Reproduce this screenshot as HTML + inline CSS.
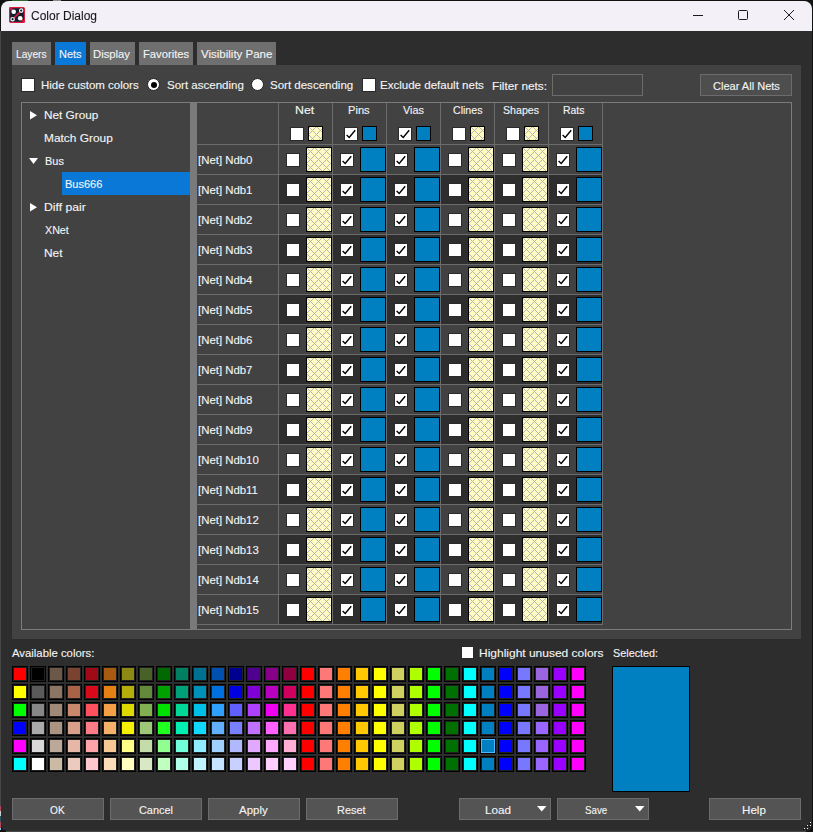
<!DOCTYPE html><html><head><meta charset="utf-8"><style>
html,body{margin:0;padding:0;width:813px;height:832px;overflow:hidden;background:#111311;}
div,svg{position:absolute;box-sizing:border-box;}
.t{font-family:"Liberation Sans",sans-serif;font-size:11.5px;line-height:14px;color:#f4f4f4;white-space:nowrap;-webkit-text-stroke:0.12px #f4f4f4;}
</style></head><body>
<svg width="0" height="0" style="position:absolute"><defs>
<pattern id="hatch" patternUnits="userSpaceOnUse" width="8" height="8"><g fill="#b4b4bc" shape-rendering="crispEdges"><rect x="0" y="0" width="1" height="1"/><rect x="1" y="1" width="1" height="1"/><rect x="1" y="7" width="1" height="1"/><rect x="2" y="2" width="1" height="1"/><rect x="2" y="6" width="1" height="1"/><rect x="3" y="3" width="1" height="1"/><rect x="3" y="5" width="1" height="1"/><rect x="4" y="4" width="1" height="1"/><rect x="5" y="3" width="1" height="1"/><rect x="5" y="5" width="1" height="1"/><rect x="6" y="2" width="1" height="1"/><rect x="6" y="6" width="1" height="1"/><rect x="7" y="1" width="1" height="1"/><rect x="7" y="7" width="1" height="1"/></g></pattern>
</defs></svg>
<div style="left:12px;top:0px;width:16px;height:1px;background:#2f6a2f;"></div><div style="left:53px;top:0px;width:8px;height:1px;background:#8a8a8a;"></div><div style="left:0px;top:806px;width:1px;height:5px;background:#b04858;"></div><div style="left:0px;top:811px;width:1px;height:5px;background:#c8d0d0;"></div><div style="left:0px;top:816px;width:1px;height:6px;background:#2f5560;"></div><div style="left:0px;top:822px;width:1px;height:6px;background:#b04858;"></div><div style="left:0px;top:828px;width:1px;height:2px;background:#80c0f0;"></div><div style="left:0px;top:31px;width:1px;height:775px;background:#474747;"></div><div style="left:1px;top:1px;width:811px;height:830px;background:#2d2d2d;border-radius:8px 8px 6px 6px;"></div><div style="left:6px;top:831px;width:800px;height:1px;background:#484848;"></div><div style="left:1px;top:1px;width:811px;height:30px;background:#f3f0f7;border-radius:8px 8px 0 0;"></div><div class="t" style="left:31px;top:9px;color:#1a1a1a;font-size:12px;-webkit-text-stroke:0.1px #1a1a1a;will-change:transform;">Color Dialog</div><svg style="left:9px;top:7px" width="16" height="16" viewBox="0 0 16 16">
<rect x="0.6" y="0.6" width="14.8" height="14.8" rx="1.5" fill="#0c2030" stroke="#d81c3c" stroke-width="1.2"/>
<path d="M4 12 L12 4" stroke="#e8183c" stroke-width="1.7"/>
<path d="M0.5 0.5 L4 4 M12 12 L15.5 15.5" stroke="#e8183c" stroke-width="1.7"/>
<circle cx="4.7" cy="4.7" r="2.3" fill="#fff"/><circle cx="11.2" cy="11.2" r="2.3" fill="#fff"/>
<circle cx="12.2" cy="3.6" r="1.7" fill="#0c2030" stroke="#f0f4f4" stroke-width="1.2"/>
<circle cx="3.6" cy="12.2" r="1.7" fill="#0c2030" stroke="#f0f4f4" stroke-width="1.2"/>
</svg><svg style="left:680px;top:0px" width="130" height="31" viewBox="0 0 130 31"><path d="M13 15.5 H23" stroke="#1a1a1a" stroke-width="1"/><rect x="58.5" y="10.5" width="9" height="9" rx="1" fill="none" stroke="#1a1a1a" stroke-width="1"/><path d="M104 10 L114 20 M114 10 L104 20" stroke="#1a1a1a" stroke-width="1"/></svg><div style="left:12px;top:42px;width:39px;height:23px;background:#6f6f6f;"></div><div class="t" style="left:15.51px;top:47px;transform:scaleX(0.8853);transform-origin:0 0;">Layers</div><div style="left:55px;top:42px;width:31px;height:23px;background:#0a78d7;"></div><div class="t" style="left:58.65px;top:47px;transform:scaleX(0.9522);transform-origin:0 0;">Nets</div><div style="left:90px;top:42px;width:45px;height:23px;background:#6f6f6f;"></div><div class="t" style="left:93.42px;top:47px;transform:scaleX(0.9811);transform-origin:0 0;">Display</div><div style="left:139px;top:42px;width:54px;height:23px;background:#6f6f6f;"></div><div class="t" style="left:142.62px;top:47px;transform:scaleX(0.9761);transform-origin:0 0;">Favorites</div><div style="left:197px;top:42px;width:79px;height:23px;background:#6f6f6f;"></div><div class="t" style="left:201.00px;top:47px;transform:scaleX(1.0000);transform-origin:0 0;">Visibility Pane</div><div style="left:12px;top:65px;width:789px;height:574px;background:#424242;"></div><div style="left:22px;top:79px;width:12px;height:12px;background:#fff;box-shadow:0 0 0 1px #2a2a2a;"></div><div class="t" style="left:40.70px;top:78px;transform:scaleX(0.9990);transform-origin:0 0;">Hide custom colors</div><div style="left:147px;top:78px;width:13px;height:13px;border-radius:50%;background:#fff;border:1px solid #222;"></div><div style="left:150.5px;top:81.5px;width:6px;height:6px;border-radius:50%;background:#000;"></div><div class="t" style="left:166.50px;top:78px;transform:scaleX(1.0026);transform-origin:0 0;">Sort ascending</div><div style="left:251px;top:78px;width:13px;height:13px;border-radius:50%;background:#fff;border:1px solid #222;"></div><div class="t" style="left:270.40px;top:78px;transform:scaleX(1.0012);transform-origin:0 0;">Sort descending</div><div style="left:363px;top:79px;width:11.5px;height:11.5px;background:#fff;box-shadow:0 0 0 1px #2a2a2a;"></div><div class="t" style="left:380.30px;top:78px;transform:scaleX(1.0029);transform-origin:0 0;">Exclude default nets</div><div class="t" style="left:491.58px;top:79px;transform:scaleX(1.0231);transform-origin:0 0;">Filter nets:</div><div style="left:552px;top:74px;width:91px;height:22px;border:1px solid #6c6c6c;"></div><div class="t" style="left:700px;top:74px;width:92px;height:22px;background:#4e4e4e;border:1px solid #6c6c6c;text-align:center;line-height:20px;"></div><div class="t" style="left:712.60px;top:79px;transform:scaleX(0.9600);transform-origin:0 0;">Clear All Nets</div><div style="left:21px;top:102px;width:771px;height:528px;border:1px solid #7c7c7c;"></div><div style="left:190px;top:103px;width:7px;height:526px;background:#7a7a7a;"></div><div class="t" style="left:44.27px;top:108px;transform:scaleX(1.0250);transform-origin:0 0;">Net Group</div><svg style="left:30px;top:110.5px" width="8" height="9"><path d="M0 0 L7 4.25 L0 8.5 Z" fill="#fff"/></svg><div class="t" style="left:44.26px;top:131px;transform:scaleX(1.0354);transform-origin:0 0;">Match Group</div><div class="t" style="left:44.55px;top:154px;transform:scaleX(0.9526);transform-origin:0 0;">Bus</div><svg style="left:29px;top:157.5px" width="10" height="7"><path d="M0 0 L9 0 L4.5 6 Z" fill="#fff"/></svg><div style="left:62px;top:172px;width:128px;height:23px;background:#0a78d7;"></div><div class="t" style="left:64.64px;top:177px;transform:scaleX(0.9579);transform-origin:0 0;">Bus666</div><div class="t" style="left:44.44px;top:200px;transform:scaleX(1.0615);transform-origin:0 0;">Diff pair</div><svg style="left:30px;top:202.5px" width="8" height="9"><path d="M0 0 L7 4.25 L0 8.5 Z" fill="#fff"/></svg><div class="t" style="left:44.80px;top:223px;transform:scaleX(0.9308);transform-origin:0 0;">XNet</div><div class="t" style="left:44.46px;top:246px;transform:scaleX(1.0353);transform-origin:0 0;">Net</div><div style="left:279px;top:175px;width:323px;height:29px;background:#2e2e2e;"></div><div style="left:279px;top:235px;width:323px;height:29px;background:#2e2e2e;"></div><div style="left:279px;top:295px;width:323px;height:29px;background:#2e2e2e;"></div><div style="left:279px;top:355px;width:323px;height:29px;background:#2e2e2e;"></div><div style="left:279px;top:415px;width:323px;height:29px;background:#2e2e2e;"></div><div style="left:279px;top:475px;width:323px;height:29px;background:#2e2e2e;"></div><div style="left:279px;top:535px;width:323px;height:29px;background:#2e2e2e;"></div><div style="left:279px;top:595px;width:323px;height:29px;background:#2e2e2e;"></div><div style="left:278px;top:103px;width:1px;height:522px;background:#6c6c6c;"></div><div style="left:332px;top:103px;width:1px;height:522px;background:#6c6c6c;"></div><div style="left:386px;top:103px;width:1px;height:522px;background:#6c6c6c;"></div><div style="left:440px;top:103px;width:1px;height:522px;background:#6c6c6c;"></div><div style="left:494px;top:103px;width:1px;height:522px;background:#6c6c6c;"></div><div style="left:548px;top:103px;width:1px;height:522px;background:#6c6c6c;"></div><div style="left:602px;top:103px;width:1px;height:522px;background:#6c6c6c;"></div><div style="left:196px;top:144px;width:407px;height:1px;background:#6c6c6c;"></div><div style="left:196px;top:174px;width:407px;height:1px;background:#6c6c6c;"></div><div style="left:196px;top:204px;width:407px;height:1px;background:#6c6c6c;"></div><div style="left:196px;top:234px;width:407px;height:1px;background:#6c6c6c;"></div><div style="left:196px;top:264px;width:407px;height:1px;background:#6c6c6c;"></div><div style="left:196px;top:294px;width:407px;height:1px;background:#6c6c6c;"></div><div style="left:196px;top:324px;width:407px;height:1px;background:#6c6c6c;"></div><div style="left:196px;top:354px;width:407px;height:1px;background:#6c6c6c;"></div><div style="left:196px;top:384px;width:407px;height:1px;background:#6c6c6c;"></div><div style="left:196px;top:414px;width:407px;height:1px;background:#6c6c6c;"></div><div style="left:196px;top:444px;width:407px;height:1px;background:#6c6c6c;"></div><div style="left:196px;top:474px;width:407px;height:1px;background:#6c6c6c;"></div><div style="left:196px;top:504px;width:407px;height:1px;background:#6c6c6c;"></div><div style="left:196px;top:534px;width:407px;height:1px;background:#6c6c6c;"></div><div style="left:196px;top:564px;width:407px;height:1px;background:#6c6c6c;"></div><div style="left:196px;top:594px;width:407px;height:1px;background:#6c6c6c;"></div><div style="left:196px;top:624px;width:407px;height:1px;background:#6c6c6c;"></div><div class="t" style="left:295.02px;top:103px;transform:scaleX(1.0765);transform-origin:0 0;">Net</div><div style="left:290.5px;top:127.5px;width:12px;height:12px;background:#fff;box-shadow:0 0 0 1px #2a2a2a;"></div><svg style="left:308px;top:126px" width="15" height="15"><rect x="0" y="0" width="15" height="15" fill="#fffbc0"/><rect x="0" y="0" width="15" height="15" fill="url(#hatch)"/><rect x="0.5" y="0.5" width="14" height="14" fill="none" stroke="#000" stroke-width="1"/></svg><div style="left:287px;top:154px;width:12px;height:12px;background:#fff;box-shadow:0 0 0 1px #2a2a2a;"></div><svg style="left:306px;top:147px" width="26" height="25"><rect x="0" y="0" width="26" height="25" fill="#fffbc0"/><rect x="0" y="0" width="26" height="25" fill="url(#hatch)"/><rect x="0.5" y="0.5" width="25" height="24" fill="none" stroke="#000" stroke-width="1"/></svg><div style="left:287px;top:184px;width:12px;height:12px;background:#fff;box-shadow:0 0 0 1px #2a2a2a;"></div><svg style="left:306px;top:177px" width="26" height="25"><rect x="0" y="0" width="26" height="25" fill="#fffbc0"/><rect x="0" y="0" width="26" height="25" fill="url(#hatch)"/><rect x="0.5" y="0.5" width="25" height="24" fill="none" stroke="#000" stroke-width="1"/></svg><div style="left:287px;top:214px;width:12px;height:12px;background:#fff;box-shadow:0 0 0 1px #2a2a2a;"></div><svg style="left:306px;top:207px" width="26" height="25"><rect x="0" y="0" width="26" height="25" fill="#fffbc0"/><rect x="0" y="0" width="26" height="25" fill="url(#hatch)"/><rect x="0.5" y="0.5" width="25" height="24" fill="none" stroke="#000" stroke-width="1"/></svg><div style="left:287px;top:244px;width:12px;height:12px;background:#fff;box-shadow:0 0 0 1px #2a2a2a;"></div><svg style="left:306px;top:237px" width="26" height="25"><rect x="0" y="0" width="26" height="25" fill="#fffbc0"/><rect x="0" y="0" width="26" height="25" fill="url(#hatch)"/><rect x="0.5" y="0.5" width="25" height="24" fill="none" stroke="#000" stroke-width="1"/></svg><div style="left:287px;top:274px;width:12px;height:12px;background:#fff;box-shadow:0 0 0 1px #2a2a2a;"></div><svg style="left:306px;top:267px" width="26" height="25"><rect x="0" y="0" width="26" height="25" fill="#fffbc0"/><rect x="0" y="0" width="26" height="25" fill="url(#hatch)"/><rect x="0.5" y="0.5" width="25" height="24" fill="none" stroke="#000" stroke-width="1"/></svg><div style="left:287px;top:304px;width:12px;height:12px;background:#fff;box-shadow:0 0 0 1px #2a2a2a;"></div><svg style="left:306px;top:297px" width="26" height="25"><rect x="0" y="0" width="26" height="25" fill="#fffbc0"/><rect x="0" y="0" width="26" height="25" fill="url(#hatch)"/><rect x="0.5" y="0.5" width="25" height="24" fill="none" stroke="#000" stroke-width="1"/></svg><div style="left:287px;top:334px;width:12px;height:12px;background:#fff;box-shadow:0 0 0 1px #2a2a2a;"></div><svg style="left:306px;top:327px" width="26" height="25"><rect x="0" y="0" width="26" height="25" fill="#fffbc0"/><rect x="0" y="0" width="26" height="25" fill="url(#hatch)"/><rect x="0.5" y="0.5" width="25" height="24" fill="none" stroke="#000" stroke-width="1"/></svg><div style="left:287px;top:364px;width:12px;height:12px;background:#fff;box-shadow:0 0 0 1px #2a2a2a;"></div><svg style="left:306px;top:357px" width="26" height="25"><rect x="0" y="0" width="26" height="25" fill="#fffbc0"/><rect x="0" y="0" width="26" height="25" fill="url(#hatch)"/><rect x="0.5" y="0.5" width="25" height="24" fill="none" stroke="#000" stroke-width="1"/></svg><div style="left:287px;top:394px;width:12px;height:12px;background:#fff;box-shadow:0 0 0 1px #2a2a2a;"></div><svg style="left:306px;top:387px" width="26" height="25"><rect x="0" y="0" width="26" height="25" fill="#fffbc0"/><rect x="0" y="0" width="26" height="25" fill="url(#hatch)"/><rect x="0.5" y="0.5" width="25" height="24" fill="none" stroke="#000" stroke-width="1"/></svg><div style="left:287px;top:424px;width:12px;height:12px;background:#fff;box-shadow:0 0 0 1px #2a2a2a;"></div><svg style="left:306px;top:417px" width="26" height="25"><rect x="0" y="0" width="26" height="25" fill="#fffbc0"/><rect x="0" y="0" width="26" height="25" fill="url(#hatch)"/><rect x="0.5" y="0.5" width="25" height="24" fill="none" stroke="#000" stroke-width="1"/></svg><div style="left:287px;top:454px;width:12px;height:12px;background:#fff;box-shadow:0 0 0 1px #2a2a2a;"></div><svg style="left:306px;top:447px" width="26" height="25"><rect x="0" y="0" width="26" height="25" fill="#fffbc0"/><rect x="0" y="0" width="26" height="25" fill="url(#hatch)"/><rect x="0.5" y="0.5" width="25" height="24" fill="none" stroke="#000" stroke-width="1"/></svg><div style="left:287px;top:484px;width:12px;height:12px;background:#fff;box-shadow:0 0 0 1px #2a2a2a;"></div><svg style="left:306px;top:477px" width="26" height="25"><rect x="0" y="0" width="26" height="25" fill="#fffbc0"/><rect x="0" y="0" width="26" height="25" fill="url(#hatch)"/><rect x="0.5" y="0.5" width="25" height="24" fill="none" stroke="#000" stroke-width="1"/></svg><div style="left:287px;top:514px;width:12px;height:12px;background:#fff;box-shadow:0 0 0 1px #2a2a2a;"></div><svg style="left:306px;top:507px" width="26" height="25"><rect x="0" y="0" width="26" height="25" fill="#fffbc0"/><rect x="0" y="0" width="26" height="25" fill="url(#hatch)"/><rect x="0.5" y="0.5" width="25" height="24" fill="none" stroke="#000" stroke-width="1"/></svg><div style="left:287px;top:544px;width:12px;height:12px;background:#fff;box-shadow:0 0 0 1px #2a2a2a;"></div><svg style="left:306px;top:537px" width="26" height="25"><rect x="0" y="0" width="26" height="25" fill="#fffbc0"/><rect x="0" y="0" width="26" height="25" fill="url(#hatch)"/><rect x="0.5" y="0.5" width="25" height="24" fill="none" stroke="#000" stroke-width="1"/></svg><div style="left:287px;top:574px;width:12px;height:12px;background:#fff;box-shadow:0 0 0 1px #2a2a2a;"></div><svg style="left:306px;top:567px" width="26" height="25"><rect x="0" y="0" width="26" height="25" fill="#fffbc0"/><rect x="0" y="0" width="26" height="25" fill="url(#hatch)"/><rect x="0.5" y="0.5" width="25" height="24" fill="none" stroke="#000" stroke-width="1"/></svg><div style="left:287px;top:604px;width:12px;height:12px;background:#fff;box-shadow:0 0 0 1px #2a2a2a;"></div><svg style="left:306px;top:597px" width="26" height="25"><rect x="0" y="0" width="26" height="25" fill="#fffbc0"/><rect x="0" y="0" width="26" height="25" fill="url(#hatch)"/><rect x="0.5" y="0.5" width="25" height="24" fill="none" stroke="#000" stroke-width="1"/></svg><div class="t" style="left:348.33px;top:103px;transform:scaleX(0.9667);transform-origin:0 0;">Pins</div><div style="left:344.5px;top:127.5px;width:12px;height:12px;background:#fff;box-shadow:0 0 0 1px #2a2a2a;"></div><svg style="position:absolute;left:344.5px;top:127.5px" width="12" height="12" viewBox="0 0 12 12"><path d="M1.6 7.0 L4.2 9.4 L10.2 2.2" fill="none" stroke="#000" stroke-width="1.4"/></svg><div style="left:362px;top:126px;width:15px;height:15px;background:#0080c0;border:1px solid #000;"></div><div style="left:341px;top:154px;width:12px;height:12px;background:#fff;box-shadow:0 0 0 1px #2a2a2a;"></div><svg style="position:absolute;left:341px;top:154px" width="12" height="12" viewBox="0 0 12 12"><path d="M1.6 7.0 L4.2 9.4 L10.2 2.2" fill="none" stroke="#000" stroke-width="1.4"/></svg><div style="left:360px;top:147px;width:26px;height:25px;background:#0080c0;border:1px solid #000;"></div><div style="left:341px;top:184px;width:12px;height:12px;background:#fff;box-shadow:0 0 0 1px #2a2a2a;"></div><svg style="position:absolute;left:341px;top:184px" width="12" height="12" viewBox="0 0 12 12"><path d="M1.6 7.0 L4.2 9.4 L10.2 2.2" fill="none" stroke="#000" stroke-width="1.4"/></svg><div style="left:360px;top:177px;width:26px;height:25px;background:#0080c0;border:1px solid #000;"></div><div style="left:341px;top:214px;width:12px;height:12px;background:#fff;box-shadow:0 0 0 1px #2a2a2a;"></div><svg style="position:absolute;left:341px;top:214px" width="12" height="12" viewBox="0 0 12 12"><path d="M1.6 7.0 L4.2 9.4 L10.2 2.2" fill="none" stroke="#000" stroke-width="1.4"/></svg><div style="left:360px;top:207px;width:26px;height:25px;background:#0080c0;border:1px solid #000;"></div><div style="left:341px;top:244px;width:12px;height:12px;background:#fff;box-shadow:0 0 0 1px #2a2a2a;"></div><svg style="position:absolute;left:341px;top:244px" width="12" height="12" viewBox="0 0 12 12"><path d="M1.6 7.0 L4.2 9.4 L10.2 2.2" fill="none" stroke="#000" stroke-width="1.4"/></svg><div style="left:360px;top:237px;width:26px;height:25px;background:#0080c0;border:1px solid #000;"></div><div style="left:341px;top:274px;width:12px;height:12px;background:#fff;box-shadow:0 0 0 1px #2a2a2a;"></div><svg style="position:absolute;left:341px;top:274px" width="12" height="12" viewBox="0 0 12 12"><path d="M1.6 7.0 L4.2 9.4 L10.2 2.2" fill="none" stroke="#000" stroke-width="1.4"/></svg><div style="left:360px;top:267px;width:26px;height:25px;background:#0080c0;border:1px solid #000;"></div><div style="left:341px;top:304px;width:12px;height:12px;background:#fff;box-shadow:0 0 0 1px #2a2a2a;"></div><svg style="position:absolute;left:341px;top:304px" width="12" height="12" viewBox="0 0 12 12"><path d="M1.6 7.0 L4.2 9.4 L10.2 2.2" fill="none" stroke="#000" stroke-width="1.4"/></svg><div style="left:360px;top:297px;width:26px;height:25px;background:#0080c0;border:1px solid #000;"></div><div style="left:341px;top:334px;width:12px;height:12px;background:#fff;box-shadow:0 0 0 1px #2a2a2a;"></div><svg style="position:absolute;left:341px;top:334px" width="12" height="12" viewBox="0 0 12 12"><path d="M1.6 7.0 L4.2 9.4 L10.2 2.2" fill="none" stroke="#000" stroke-width="1.4"/></svg><div style="left:360px;top:327px;width:26px;height:25px;background:#0080c0;border:1px solid #000;"></div><div style="left:341px;top:364px;width:12px;height:12px;background:#fff;box-shadow:0 0 0 1px #2a2a2a;"></div><svg style="position:absolute;left:341px;top:364px" width="12" height="12" viewBox="0 0 12 12"><path d="M1.6 7.0 L4.2 9.4 L10.2 2.2" fill="none" stroke="#000" stroke-width="1.4"/></svg><div style="left:360px;top:357px;width:26px;height:25px;background:#0080c0;border:1px solid #000;"></div><div style="left:341px;top:394px;width:12px;height:12px;background:#fff;box-shadow:0 0 0 1px #2a2a2a;"></div><svg style="position:absolute;left:341px;top:394px" width="12" height="12" viewBox="0 0 12 12"><path d="M1.6 7.0 L4.2 9.4 L10.2 2.2" fill="none" stroke="#000" stroke-width="1.4"/></svg><div style="left:360px;top:387px;width:26px;height:25px;background:#0080c0;border:1px solid #000;"></div><div style="left:341px;top:424px;width:12px;height:12px;background:#fff;box-shadow:0 0 0 1px #2a2a2a;"></div><svg style="position:absolute;left:341px;top:424px" width="12" height="12" viewBox="0 0 12 12"><path d="M1.6 7.0 L4.2 9.4 L10.2 2.2" fill="none" stroke="#000" stroke-width="1.4"/></svg><div style="left:360px;top:417px;width:26px;height:25px;background:#0080c0;border:1px solid #000;"></div><div style="left:341px;top:454px;width:12px;height:12px;background:#fff;box-shadow:0 0 0 1px #2a2a2a;"></div><svg style="position:absolute;left:341px;top:454px" width="12" height="12" viewBox="0 0 12 12"><path d="M1.6 7.0 L4.2 9.4 L10.2 2.2" fill="none" stroke="#000" stroke-width="1.4"/></svg><div style="left:360px;top:447px;width:26px;height:25px;background:#0080c0;border:1px solid #000;"></div><div style="left:341px;top:484px;width:12px;height:12px;background:#fff;box-shadow:0 0 0 1px #2a2a2a;"></div><svg style="position:absolute;left:341px;top:484px" width="12" height="12" viewBox="0 0 12 12"><path d="M1.6 7.0 L4.2 9.4 L10.2 2.2" fill="none" stroke="#000" stroke-width="1.4"/></svg><div style="left:360px;top:477px;width:26px;height:25px;background:#0080c0;border:1px solid #000;"></div><div style="left:341px;top:514px;width:12px;height:12px;background:#fff;box-shadow:0 0 0 1px #2a2a2a;"></div><svg style="position:absolute;left:341px;top:514px" width="12" height="12" viewBox="0 0 12 12"><path d="M1.6 7.0 L4.2 9.4 L10.2 2.2" fill="none" stroke="#000" stroke-width="1.4"/></svg><div style="left:360px;top:507px;width:26px;height:25px;background:#0080c0;border:1px solid #000;"></div><div style="left:341px;top:544px;width:12px;height:12px;background:#fff;box-shadow:0 0 0 1px #2a2a2a;"></div><svg style="position:absolute;left:341px;top:544px" width="12" height="12" viewBox="0 0 12 12"><path d="M1.6 7.0 L4.2 9.4 L10.2 2.2" fill="none" stroke="#000" stroke-width="1.4"/></svg><div style="left:360px;top:537px;width:26px;height:25px;background:#0080c0;border:1px solid #000;"></div><div style="left:341px;top:574px;width:12px;height:12px;background:#fff;box-shadow:0 0 0 1px #2a2a2a;"></div><svg style="position:absolute;left:341px;top:574px" width="12" height="12" viewBox="0 0 12 12"><path d="M1.6 7.0 L4.2 9.4 L10.2 2.2" fill="none" stroke="#000" stroke-width="1.4"/></svg><div style="left:360px;top:567px;width:26px;height:25px;background:#0080c0;border:1px solid #000;"></div><div style="left:341px;top:604px;width:12px;height:12px;background:#fff;box-shadow:0 0 0 1px #2a2a2a;"></div><svg style="position:absolute;left:341px;top:604px" width="12" height="12" viewBox="0 0 12 12"><path d="M1.6 7.0 L4.2 9.4 L10.2 2.2" fill="none" stroke="#000" stroke-width="1.4"/></svg><div style="left:360px;top:597px;width:26px;height:25px;background:#0080c0;border:1px solid #000;"></div><div class="t" style="left:403.00px;top:103px;transform:scaleX(0.9409);transform-origin:0 0;">Vias</div><div style="left:398.5px;top:127.5px;width:12px;height:12px;background:#fff;box-shadow:0 0 0 1px #2a2a2a;"></div><svg style="position:absolute;left:398.5px;top:127.5px" width="12" height="12" viewBox="0 0 12 12"><path d="M1.6 7.0 L4.2 9.4 L10.2 2.2" fill="none" stroke="#000" stroke-width="1.4"/></svg><div style="left:416px;top:126px;width:15px;height:15px;background:#0080c0;border:1px solid #000;"></div><div style="left:395px;top:154px;width:12px;height:12px;background:#fff;box-shadow:0 0 0 1px #2a2a2a;"></div><svg style="position:absolute;left:395px;top:154px" width="12" height="12" viewBox="0 0 12 12"><path d="M1.6 7.0 L4.2 9.4 L10.2 2.2" fill="none" stroke="#000" stroke-width="1.4"/></svg><div style="left:414px;top:147px;width:26px;height:25px;background:#0080c0;border:1px solid #000;"></div><div style="left:395px;top:184px;width:12px;height:12px;background:#fff;box-shadow:0 0 0 1px #2a2a2a;"></div><svg style="position:absolute;left:395px;top:184px" width="12" height="12" viewBox="0 0 12 12"><path d="M1.6 7.0 L4.2 9.4 L10.2 2.2" fill="none" stroke="#000" stroke-width="1.4"/></svg><div style="left:414px;top:177px;width:26px;height:25px;background:#0080c0;border:1px solid #000;"></div><div style="left:395px;top:214px;width:12px;height:12px;background:#fff;box-shadow:0 0 0 1px #2a2a2a;"></div><svg style="position:absolute;left:395px;top:214px" width="12" height="12" viewBox="0 0 12 12"><path d="M1.6 7.0 L4.2 9.4 L10.2 2.2" fill="none" stroke="#000" stroke-width="1.4"/></svg><div style="left:414px;top:207px;width:26px;height:25px;background:#0080c0;border:1px solid #000;"></div><div style="left:395px;top:244px;width:12px;height:12px;background:#fff;box-shadow:0 0 0 1px #2a2a2a;"></div><svg style="position:absolute;left:395px;top:244px" width="12" height="12" viewBox="0 0 12 12"><path d="M1.6 7.0 L4.2 9.4 L10.2 2.2" fill="none" stroke="#000" stroke-width="1.4"/></svg><div style="left:414px;top:237px;width:26px;height:25px;background:#0080c0;border:1px solid #000;"></div><div style="left:395px;top:274px;width:12px;height:12px;background:#fff;box-shadow:0 0 0 1px #2a2a2a;"></div><svg style="position:absolute;left:395px;top:274px" width="12" height="12" viewBox="0 0 12 12"><path d="M1.6 7.0 L4.2 9.4 L10.2 2.2" fill="none" stroke="#000" stroke-width="1.4"/></svg><div style="left:414px;top:267px;width:26px;height:25px;background:#0080c0;border:1px solid #000;"></div><div style="left:395px;top:304px;width:12px;height:12px;background:#fff;box-shadow:0 0 0 1px #2a2a2a;"></div><svg style="position:absolute;left:395px;top:304px" width="12" height="12" viewBox="0 0 12 12"><path d="M1.6 7.0 L4.2 9.4 L10.2 2.2" fill="none" stroke="#000" stroke-width="1.4"/></svg><div style="left:414px;top:297px;width:26px;height:25px;background:#0080c0;border:1px solid #000;"></div><div style="left:395px;top:334px;width:12px;height:12px;background:#fff;box-shadow:0 0 0 1px #2a2a2a;"></div><svg style="position:absolute;left:395px;top:334px" width="12" height="12" viewBox="0 0 12 12"><path d="M1.6 7.0 L4.2 9.4 L10.2 2.2" fill="none" stroke="#000" stroke-width="1.4"/></svg><div style="left:414px;top:327px;width:26px;height:25px;background:#0080c0;border:1px solid #000;"></div><div style="left:395px;top:364px;width:12px;height:12px;background:#fff;box-shadow:0 0 0 1px #2a2a2a;"></div><svg style="position:absolute;left:395px;top:364px" width="12" height="12" viewBox="0 0 12 12"><path d="M1.6 7.0 L4.2 9.4 L10.2 2.2" fill="none" stroke="#000" stroke-width="1.4"/></svg><div style="left:414px;top:357px;width:26px;height:25px;background:#0080c0;border:1px solid #000;"></div><div style="left:395px;top:394px;width:12px;height:12px;background:#fff;box-shadow:0 0 0 1px #2a2a2a;"></div><svg style="position:absolute;left:395px;top:394px" width="12" height="12" viewBox="0 0 12 12"><path d="M1.6 7.0 L4.2 9.4 L10.2 2.2" fill="none" stroke="#000" stroke-width="1.4"/></svg><div style="left:414px;top:387px;width:26px;height:25px;background:#0080c0;border:1px solid #000;"></div><div style="left:395px;top:424px;width:12px;height:12px;background:#fff;box-shadow:0 0 0 1px #2a2a2a;"></div><svg style="position:absolute;left:395px;top:424px" width="12" height="12" viewBox="0 0 12 12"><path d="M1.6 7.0 L4.2 9.4 L10.2 2.2" fill="none" stroke="#000" stroke-width="1.4"/></svg><div style="left:414px;top:417px;width:26px;height:25px;background:#0080c0;border:1px solid #000;"></div><div style="left:395px;top:454px;width:12px;height:12px;background:#fff;box-shadow:0 0 0 1px #2a2a2a;"></div><svg style="position:absolute;left:395px;top:454px" width="12" height="12" viewBox="0 0 12 12"><path d="M1.6 7.0 L4.2 9.4 L10.2 2.2" fill="none" stroke="#000" stroke-width="1.4"/></svg><div style="left:414px;top:447px;width:26px;height:25px;background:#0080c0;border:1px solid #000;"></div><div style="left:395px;top:484px;width:12px;height:12px;background:#fff;box-shadow:0 0 0 1px #2a2a2a;"></div><svg style="position:absolute;left:395px;top:484px" width="12" height="12" viewBox="0 0 12 12"><path d="M1.6 7.0 L4.2 9.4 L10.2 2.2" fill="none" stroke="#000" stroke-width="1.4"/></svg><div style="left:414px;top:477px;width:26px;height:25px;background:#0080c0;border:1px solid #000;"></div><div style="left:395px;top:514px;width:12px;height:12px;background:#fff;box-shadow:0 0 0 1px #2a2a2a;"></div><svg style="position:absolute;left:395px;top:514px" width="12" height="12" viewBox="0 0 12 12"><path d="M1.6 7.0 L4.2 9.4 L10.2 2.2" fill="none" stroke="#000" stroke-width="1.4"/></svg><div style="left:414px;top:507px;width:26px;height:25px;background:#0080c0;border:1px solid #000;"></div><div style="left:395px;top:544px;width:12px;height:12px;background:#fff;box-shadow:0 0 0 1px #2a2a2a;"></div><svg style="position:absolute;left:395px;top:544px" width="12" height="12" viewBox="0 0 12 12"><path d="M1.6 7.0 L4.2 9.4 L10.2 2.2" fill="none" stroke="#000" stroke-width="1.4"/></svg><div style="left:414px;top:537px;width:26px;height:25px;background:#0080c0;border:1px solid #000;"></div><div style="left:395px;top:574px;width:12px;height:12px;background:#fff;box-shadow:0 0 0 1px #2a2a2a;"></div><svg style="position:absolute;left:395px;top:574px" width="12" height="12" viewBox="0 0 12 12"><path d="M1.6 7.0 L4.2 9.4 L10.2 2.2" fill="none" stroke="#000" stroke-width="1.4"/></svg><div style="left:414px;top:567px;width:26px;height:25px;background:#0080c0;border:1px solid #000;"></div><div style="left:395px;top:604px;width:12px;height:12px;background:#fff;box-shadow:0 0 0 1px #2a2a2a;"></div><svg style="position:absolute;left:395px;top:604px" width="12" height="12" viewBox="0 0 12 12"><path d="M1.6 7.0 L4.2 9.4 L10.2 2.2" fill="none" stroke="#000" stroke-width="1.4"/></svg><div style="left:414px;top:597px;width:26px;height:25px;background:#0080c0;border:1px solid #000;"></div><div class="t" style="left:452.80px;top:103px;transform:scaleX(0.9219);transform-origin:0 0;">Clines</div><div style="left:452.5px;top:127.5px;width:12px;height:12px;background:#fff;box-shadow:0 0 0 1px #2a2a2a;"></div><svg style="left:470px;top:126px" width="15" height="15"><rect x="0" y="0" width="15" height="15" fill="#fffbc0"/><rect x="0" y="0" width="15" height="15" fill="url(#hatch)"/><rect x="0.5" y="0.5" width="14" height="14" fill="none" stroke="#000" stroke-width="1"/></svg><div style="left:449px;top:154px;width:12px;height:12px;background:#fff;box-shadow:0 0 0 1px #2a2a2a;"></div><svg style="left:468px;top:147px" width="26" height="25"><rect x="0" y="0" width="26" height="25" fill="#fffbc0"/><rect x="0" y="0" width="26" height="25" fill="url(#hatch)"/><rect x="0.5" y="0.5" width="25" height="24" fill="none" stroke="#000" stroke-width="1"/></svg><div style="left:449px;top:184px;width:12px;height:12px;background:#fff;box-shadow:0 0 0 1px #2a2a2a;"></div><svg style="left:468px;top:177px" width="26" height="25"><rect x="0" y="0" width="26" height="25" fill="#fffbc0"/><rect x="0" y="0" width="26" height="25" fill="url(#hatch)"/><rect x="0.5" y="0.5" width="25" height="24" fill="none" stroke="#000" stroke-width="1"/></svg><div style="left:449px;top:214px;width:12px;height:12px;background:#fff;box-shadow:0 0 0 1px #2a2a2a;"></div><svg style="left:468px;top:207px" width="26" height="25"><rect x="0" y="0" width="26" height="25" fill="#fffbc0"/><rect x="0" y="0" width="26" height="25" fill="url(#hatch)"/><rect x="0.5" y="0.5" width="25" height="24" fill="none" stroke="#000" stroke-width="1"/></svg><div style="left:449px;top:244px;width:12px;height:12px;background:#fff;box-shadow:0 0 0 1px #2a2a2a;"></div><svg style="left:468px;top:237px" width="26" height="25"><rect x="0" y="0" width="26" height="25" fill="#fffbc0"/><rect x="0" y="0" width="26" height="25" fill="url(#hatch)"/><rect x="0.5" y="0.5" width="25" height="24" fill="none" stroke="#000" stroke-width="1"/></svg><div style="left:449px;top:274px;width:12px;height:12px;background:#fff;box-shadow:0 0 0 1px #2a2a2a;"></div><svg style="left:468px;top:267px" width="26" height="25"><rect x="0" y="0" width="26" height="25" fill="#fffbc0"/><rect x="0" y="0" width="26" height="25" fill="url(#hatch)"/><rect x="0.5" y="0.5" width="25" height="24" fill="none" stroke="#000" stroke-width="1"/></svg><div style="left:449px;top:304px;width:12px;height:12px;background:#fff;box-shadow:0 0 0 1px #2a2a2a;"></div><svg style="left:468px;top:297px" width="26" height="25"><rect x="0" y="0" width="26" height="25" fill="#fffbc0"/><rect x="0" y="0" width="26" height="25" fill="url(#hatch)"/><rect x="0.5" y="0.5" width="25" height="24" fill="none" stroke="#000" stroke-width="1"/></svg><div style="left:449px;top:334px;width:12px;height:12px;background:#fff;box-shadow:0 0 0 1px #2a2a2a;"></div><svg style="left:468px;top:327px" width="26" height="25"><rect x="0" y="0" width="26" height="25" fill="#fffbc0"/><rect x="0" y="0" width="26" height="25" fill="url(#hatch)"/><rect x="0.5" y="0.5" width="25" height="24" fill="none" stroke="#000" stroke-width="1"/></svg><div style="left:449px;top:364px;width:12px;height:12px;background:#fff;box-shadow:0 0 0 1px #2a2a2a;"></div><svg style="left:468px;top:357px" width="26" height="25"><rect x="0" y="0" width="26" height="25" fill="#fffbc0"/><rect x="0" y="0" width="26" height="25" fill="url(#hatch)"/><rect x="0.5" y="0.5" width="25" height="24" fill="none" stroke="#000" stroke-width="1"/></svg><div style="left:449px;top:394px;width:12px;height:12px;background:#fff;box-shadow:0 0 0 1px #2a2a2a;"></div><svg style="left:468px;top:387px" width="26" height="25"><rect x="0" y="0" width="26" height="25" fill="#fffbc0"/><rect x="0" y="0" width="26" height="25" fill="url(#hatch)"/><rect x="0.5" y="0.5" width="25" height="24" fill="none" stroke="#000" stroke-width="1"/></svg><div style="left:449px;top:424px;width:12px;height:12px;background:#fff;box-shadow:0 0 0 1px #2a2a2a;"></div><svg style="left:468px;top:417px" width="26" height="25"><rect x="0" y="0" width="26" height="25" fill="#fffbc0"/><rect x="0" y="0" width="26" height="25" fill="url(#hatch)"/><rect x="0.5" y="0.5" width="25" height="24" fill="none" stroke="#000" stroke-width="1"/></svg><div style="left:449px;top:454px;width:12px;height:12px;background:#fff;box-shadow:0 0 0 1px #2a2a2a;"></div><svg style="left:468px;top:447px" width="26" height="25"><rect x="0" y="0" width="26" height="25" fill="#fffbc0"/><rect x="0" y="0" width="26" height="25" fill="url(#hatch)"/><rect x="0.5" y="0.5" width="25" height="24" fill="none" stroke="#000" stroke-width="1"/></svg><div style="left:449px;top:484px;width:12px;height:12px;background:#fff;box-shadow:0 0 0 1px #2a2a2a;"></div><svg style="left:468px;top:477px" width="26" height="25"><rect x="0" y="0" width="26" height="25" fill="#fffbc0"/><rect x="0" y="0" width="26" height="25" fill="url(#hatch)"/><rect x="0.5" y="0.5" width="25" height="24" fill="none" stroke="#000" stroke-width="1"/></svg><div style="left:449px;top:514px;width:12px;height:12px;background:#fff;box-shadow:0 0 0 1px #2a2a2a;"></div><svg style="left:468px;top:507px" width="26" height="25"><rect x="0" y="0" width="26" height="25" fill="#fffbc0"/><rect x="0" y="0" width="26" height="25" fill="url(#hatch)"/><rect x="0.5" y="0.5" width="25" height="24" fill="none" stroke="#000" stroke-width="1"/></svg><div style="left:449px;top:544px;width:12px;height:12px;background:#fff;box-shadow:0 0 0 1px #2a2a2a;"></div><svg style="left:468px;top:537px" width="26" height="25"><rect x="0" y="0" width="26" height="25" fill="#fffbc0"/><rect x="0" y="0" width="26" height="25" fill="url(#hatch)"/><rect x="0.5" y="0.5" width="25" height="24" fill="none" stroke="#000" stroke-width="1"/></svg><div style="left:449px;top:574px;width:12px;height:12px;background:#fff;box-shadow:0 0 0 1px #2a2a2a;"></div><svg style="left:468px;top:567px" width="26" height="25"><rect x="0" y="0" width="26" height="25" fill="#fffbc0"/><rect x="0" y="0" width="26" height="25" fill="url(#hatch)"/><rect x="0.5" y="0.5" width="25" height="24" fill="none" stroke="#000" stroke-width="1"/></svg><div style="left:449px;top:604px;width:12px;height:12px;background:#fff;box-shadow:0 0 0 1px #2a2a2a;"></div><svg style="left:468px;top:597px" width="26" height="25"><rect x="0" y="0" width="26" height="25" fill="#fffbc0"/><rect x="0" y="0" width="26" height="25" fill="url(#hatch)"/><rect x="0.5" y="0.5" width="25" height="24" fill="none" stroke="#000" stroke-width="1"/></svg><div class="t" style="left:503.40px;top:103px;transform:scaleX(0.9231);transform-origin:0 0;">Shapes</div><div style="left:506.5px;top:127.5px;width:12px;height:12px;background:#fff;box-shadow:0 0 0 1px #2a2a2a;"></div><svg style="left:524px;top:126px" width="15" height="15"><rect x="0" y="0" width="15" height="15" fill="#fffbc0"/><rect x="0" y="0" width="15" height="15" fill="url(#hatch)"/><rect x="0.5" y="0.5" width="14" height="14" fill="none" stroke="#000" stroke-width="1"/></svg><div style="left:503px;top:154px;width:12px;height:12px;background:#fff;box-shadow:0 0 0 1px #2a2a2a;"></div><svg style="left:522px;top:147px" width="26" height="25"><rect x="0" y="0" width="26" height="25" fill="#fffbc0"/><rect x="0" y="0" width="26" height="25" fill="url(#hatch)"/><rect x="0.5" y="0.5" width="25" height="24" fill="none" stroke="#000" stroke-width="1"/></svg><div style="left:503px;top:184px;width:12px;height:12px;background:#fff;box-shadow:0 0 0 1px #2a2a2a;"></div><svg style="left:522px;top:177px" width="26" height="25"><rect x="0" y="0" width="26" height="25" fill="#fffbc0"/><rect x="0" y="0" width="26" height="25" fill="url(#hatch)"/><rect x="0.5" y="0.5" width="25" height="24" fill="none" stroke="#000" stroke-width="1"/></svg><div style="left:503px;top:214px;width:12px;height:12px;background:#fff;box-shadow:0 0 0 1px #2a2a2a;"></div><svg style="left:522px;top:207px" width="26" height="25"><rect x="0" y="0" width="26" height="25" fill="#fffbc0"/><rect x="0" y="0" width="26" height="25" fill="url(#hatch)"/><rect x="0.5" y="0.5" width="25" height="24" fill="none" stroke="#000" stroke-width="1"/></svg><div style="left:503px;top:244px;width:12px;height:12px;background:#fff;box-shadow:0 0 0 1px #2a2a2a;"></div><svg style="left:522px;top:237px" width="26" height="25"><rect x="0" y="0" width="26" height="25" fill="#fffbc0"/><rect x="0" y="0" width="26" height="25" fill="url(#hatch)"/><rect x="0.5" y="0.5" width="25" height="24" fill="none" stroke="#000" stroke-width="1"/></svg><div style="left:503px;top:274px;width:12px;height:12px;background:#fff;box-shadow:0 0 0 1px #2a2a2a;"></div><svg style="left:522px;top:267px" width="26" height="25"><rect x="0" y="0" width="26" height="25" fill="#fffbc0"/><rect x="0" y="0" width="26" height="25" fill="url(#hatch)"/><rect x="0.5" y="0.5" width="25" height="24" fill="none" stroke="#000" stroke-width="1"/></svg><div style="left:503px;top:304px;width:12px;height:12px;background:#fff;box-shadow:0 0 0 1px #2a2a2a;"></div><svg style="left:522px;top:297px" width="26" height="25"><rect x="0" y="0" width="26" height="25" fill="#fffbc0"/><rect x="0" y="0" width="26" height="25" fill="url(#hatch)"/><rect x="0.5" y="0.5" width="25" height="24" fill="none" stroke="#000" stroke-width="1"/></svg><div style="left:503px;top:334px;width:12px;height:12px;background:#fff;box-shadow:0 0 0 1px #2a2a2a;"></div><svg style="left:522px;top:327px" width="26" height="25"><rect x="0" y="0" width="26" height="25" fill="#fffbc0"/><rect x="0" y="0" width="26" height="25" fill="url(#hatch)"/><rect x="0.5" y="0.5" width="25" height="24" fill="none" stroke="#000" stroke-width="1"/></svg><div style="left:503px;top:364px;width:12px;height:12px;background:#fff;box-shadow:0 0 0 1px #2a2a2a;"></div><svg style="left:522px;top:357px" width="26" height="25"><rect x="0" y="0" width="26" height="25" fill="#fffbc0"/><rect x="0" y="0" width="26" height="25" fill="url(#hatch)"/><rect x="0.5" y="0.5" width="25" height="24" fill="none" stroke="#000" stroke-width="1"/></svg><div style="left:503px;top:394px;width:12px;height:12px;background:#fff;box-shadow:0 0 0 1px #2a2a2a;"></div><svg style="left:522px;top:387px" width="26" height="25"><rect x="0" y="0" width="26" height="25" fill="#fffbc0"/><rect x="0" y="0" width="26" height="25" fill="url(#hatch)"/><rect x="0.5" y="0.5" width="25" height="24" fill="none" stroke="#000" stroke-width="1"/></svg><div style="left:503px;top:424px;width:12px;height:12px;background:#fff;box-shadow:0 0 0 1px #2a2a2a;"></div><svg style="left:522px;top:417px" width="26" height="25"><rect x="0" y="0" width="26" height="25" fill="#fffbc0"/><rect x="0" y="0" width="26" height="25" fill="url(#hatch)"/><rect x="0.5" y="0.5" width="25" height="24" fill="none" stroke="#000" stroke-width="1"/></svg><div style="left:503px;top:454px;width:12px;height:12px;background:#fff;box-shadow:0 0 0 1px #2a2a2a;"></div><svg style="left:522px;top:447px" width="26" height="25"><rect x="0" y="0" width="26" height="25" fill="#fffbc0"/><rect x="0" y="0" width="26" height="25" fill="url(#hatch)"/><rect x="0.5" y="0.5" width="25" height="24" fill="none" stroke="#000" stroke-width="1"/></svg><div style="left:503px;top:484px;width:12px;height:12px;background:#fff;box-shadow:0 0 0 1px #2a2a2a;"></div><svg style="left:522px;top:477px" width="26" height="25"><rect x="0" y="0" width="26" height="25" fill="#fffbc0"/><rect x="0" y="0" width="26" height="25" fill="url(#hatch)"/><rect x="0.5" y="0.5" width="25" height="24" fill="none" stroke="#000" stroke-width="1"/></svg><div style="left:503px;top:514px;width:12px;height:12px;background:#fff;box-shadow:0 0 0 1px #2a2a2a;"></div><svg style="left:522px;top:507px" width="26" height="25"><rect x="0" y="0" width="26" height="25" fill="#fffbc0"/><rect x="0" y="0" width="26" height="25" fill="url(#hatch)"/><rect x="0.5" y="0.5" width="25" height="24" fill="none" stroke="#000" stroke-width="1"/></svg><div style="left:503px;top:544px;width:12px;height:12px;background:#fff;box-shadow:0 0 0 1px #2a2a2a;"></div><svg style="left:522px;top:537px" width="26" height="25"><rect x="0" y="0" width="26" height="25" fill="#fffbc0"/><rect x="0" y="0" width="26" height="25" fill="url(#hatch)"/><rect x="0.5" y="0.5" width="25" height="24" fill="none" stroke="#000" stroke-width="1"/></svg><div style="left:503px;top:574px;width:12px;height:12px;background:#fff;box-shadow:0 0 0 1px #2a2a2a;"></div><svg style="left:522px;top:567px" width="26" height="25"><rect x="0" y="0" width="26" height="25" fill="#fffbc0"/><rect x="0" y="0" width="26" height="25" fill="url(#hatch)"/><rect x="0.5" y="0.5" width="25" height="24" fill="none" stroke="#000" stroke-width="1"/></svg><div style="left:503px;top:604px;width:12px;height:12px;background:#fff;box-shadow:0 0 0 1px #2a2a2a;"></div><svg style="left:522px;top:597px" width="26" height="25"><rect x="0" y="0" width="26" height="25" fill="#fffbc0"/><rect x="0" y="0" width="26" height="25" fill="url(#hatch)"/><rect x="0.5" y="0.5" width="25" height="24" fill="none" stroke="#000" stroke-width="1"/></svg><div class="t" style="left:563.49px;top:103px;transform:scaleX(0.9087);transform-origin:0 0;">Rats</div><div style="left:560.5px;top:127.5px;width:12px;height:12px;background:#fff;box-shadow:0 0 0 1px #2a2a2a;"></div><svg style="position:absolute;left:560.5px;top:127.5px" width="12" height="12" viewBox="0 0 12 12"><path d="M1.6 7.0 L4.2 9.4 L10.2 2.2" fill="none" stroke="#000" stroke-width="1.4"/></svg><div style="left:578px;top:126px;width:15px;height:15px;background:#0080c0;border:1px solid #000;"></div><div style="left:557px;top:154px;width:12px;height:12px;background:#fff;box-shadow:0 0 0 1px #2a2a2a;"></div><svg style="position:absolute;left:557px;top:154px" width="12" height="12" viewBox="0 0 12 12"><path d="M1.6 7.0 L4.2 9.4 L10.2 2.2" fill="none" stroke="#000" stroke-width="1.4"/></svg><div style="left:576px;top:147px;width:26px;height:25px;background:#0080c0;border:1px solid #000;"></div><div style="left:557px;top:184px;width:12px;height:12px;background:#fff;box-shadow:0 0 0 1px #2a2a2a;"></div><svg style="position:absolute;left:557px;top:184px" width="12" height="12" viewBox="0 0 12 12"><path d="M1.6 7.0 L4.2 9.4 L10.2 2.2" fill="none" stroke="#000" stroke-width="1.4"/></svg><div style="left:576px;top:177px;width:26px;height:25px;background:#0080c0;border:1px solid #000;"></div><div style="left:557px;top:214px;width:12px;height:12px;background:#fff;box-shadow:0 0 0 1px #2a2a2a;"></div><svg style="position:absolute;left:557px;top:214px" width="12" height="12" viewBox="0 0 12 12"><path d="M1.6 7.0 L4.2 9.4 L10.2 2.2" fill="none" stroke="#000" stroke-width="1.4"/></svg><div style="left:576px;top:207px;width:26px;height:25px;background:#0080c0;border:1px solid #000;"></div><div style="left:557px;top:244px;width:12px;height:12px;background:#fff;box-shadow:0 0 0 1px #2a2a2a;"></div><svg style="position:absolute;left:557px;top:244px" width="12" height="12" viewBox="0 0 12 12"><path d="M1.6 7.0 L4.2 9.4 L10.2 2.2" fill="none" stroke="#000" stroke-width="1.4"/></svg><div style="left:576px;top:237px;width:26px;height:25px;background:#0080c0;border:1px solid #000;"></div><div style="left:557px;top:274px;width:12px;height:12px;background:#fff;box-shadow:0 0 0 1px #2a2a2a;"></div><svg style="position:absolute;left:557px;top:274px" width="12" height="12" viewBox="0 0 12 12"><path d="M1.6 7.0 L4.2 9.4 L10.2 2.2" fill="none" stroke="#000" stroke-width="1.4"/></svg><div style="left:576px;top:267px;width:26px;height:25px;background:#0080c0;border:1px solid #000;"></div><div style="left:557px;top:304px;width:12px;height:12px;background:#fff;box-shadow:0 0 0 1px #2a2a2a;"></div><svg style="position:absolute;left:557px;top:304px" width="12" height="12" viewBox="0 0 12 12"><path d="M1.6 7.0 L4.2 9.4 L10.2 2.2" fill="none" stroke="#000" stroke-width="1.4"/></svg><div style="left:576px;top:297px;width:26px;height:25px;background:#0080c0;border:1px solid #000;"></div><div style="left:557px;top:334px;width:12px;height:12px;background:#fff;box-shadow:0 0 0 1px #2a2a2a;"></div><svg style="position:absolute;left:557px;top:334px" width="12" height="12" viewBox="0 0 12 12"><path d="M1.6 7.0 L4.2 9.4 L10.2 2.2" fill="none" stroke="#000" stroke-width="1.4"/></svg><div style="left:576px;top:327px;width:26px;height:25px;background:#0080c0;border:1px solid #000;"></div><div style="left:557px;top:364px;width:12px;height:12px;background:#fff;box-shadow:0 0 0 1px #2a2a2a;"></div><svg style="position:absolute;left:557px;top:364px" width="12" height="12" viewBox="0 0 12 12"><path d="M1.6 7.0 L4.2 9.4 L10.2 2.2" fill="none" stroke="#000" stroke-width="1.4"/></svg><div style="left:576px;top:357px;width:26px;height:25px;background:#0080c0;border:1px solid #000;"></div><div style="left:557px;top:394px;width:12px;height:12px;background:#fff;box-shadow:0 0 0 1px #2a2a2a;"></div><svg style="position:absolute;left:557px;top:394px" width="12" height="12" viewBox="0 0 12 12"><path d="M1.6 7.0 L4.2 9.4 L10.2 2.2" fill="none" stroke="#000" stroke-width="1.4"/></svg><div style="left:576px;top:387px;width:26px;height:25px;background:#0080c0;border:1px solid #000;"></div><div style="left:557px;top:424px;width:12px;height:12px;background:#fff;box-shadow:0 0 0 1px #2a2a2a;"></div><svg style="position:absolute;left:557px;top:424px" width="12" height="12" viewBox="0 0 12 12"><path d="M1.6 7.0 L4.2 9.4 L10.2 2.2" fill="none" stroke="#000" stroke-width="1.4"/></svg><div style="left:576px;top:417px;width:26px;height:25px;background:#0080c0;border:1px solid #000;"></div><div style="left:557px;top:454px;width:12px;height:12px;background:#fff;box-shadow:0 0 0 1px #2a2a2a;"></div><svg style="position:absolute;left:557px;top:454px" width="12" height="12" viewBox="0 0 12 12"><path d="M1.6 7.0 L4.2 9.4 L10.2 2.2" fill="none" stroke="#000" stroke-width="1.4"/></svg><div style="left:576px;top:447px;width:26px;height:25px;background:#0080c0;border:1px solid #000;"></div><div style="left:557px;top:484px;width:12px;height:12px;background:#fff;box-shadow:0 0 0 1px #2a2a2a;"></div><svg style="position:absolute;left:557px;top:484px" width="12" height="12" viewBox="0 0 12 12"><path d="M1.6 7.0 L4.2 9.4 L10.2 2.2" fill="none" stroke="#000" stroke-width="1.4"/></svg><div style="left:576px;top:477px;width:26px;height:25px;background:#0080c0;border:1px solid #000;"></div><div style="left:557px;top:514px;width:12px;height:12px;background:#fff;box-shadow:0 0 0 1px #2a2a2a;"></div><svg style="position:absolute;left:557px;top:514px" width="12" height="12" viewBox="0 0 12 12"><path d="M1.6 7.0 L4.2 9.4 L10.2 2.2" fill="none" stroke="#000" stroke-width="1.4"/></svg><div style="left:576px;top:507px;width:26px;height:25px;background:#0080c0;border:1px solid #000;"></div><div style="left:557px;top:544px;width:12px;height:12px;background:#fff;box-shadow:0 0 0 1px #2a2a2a;"></div><svg style="position:absolute;left:557px;top:544px" width="12" height="12" viewBox="0 0 12 12"><path d="M1.6 7.0 L4.2 9.4 L10.2 2.2" fill="none" stroke="#000" stroke-width="1.4"/></svg><div style="left:576px;top:537px;width:26px;height:25px;background:#0080c0;border:1px solid #000;"></div><div style="left:557px;top:574px;width:12px;height:12px;background:#fff;box-shadow:0 0 0 1px #2a2a2a;"></div><svg style="position:absolute;left:557px;top:574px" width="12" height="12" viewBox="0 0 12 12"><path d="M1.6 7.0 L4.2 9.4 L10.2 2.2" fill="none" stroke="#000" stroke-width="1.4"/></svg><div style="left:576px;top:567px;width:26px;height:25px;background:#0080c0;border:1px solid #000;"></div><div style="left:557px;top:604px;width:12px;height:12px;background:#fff;box-shadow:0 0 0 1px #2a2a2a;"></div><svg style="position:absolute;left:557px;top:604px" width="12" height="12" viewBox="0 0 12 12"><path d="M1.6 7.0 L4.2 9.4 L10.2 2.2" fill="none" stroke="#000" stroke-width="1.4"/></svg><div style="left:576px;top:597px;width:26px;height:25px;background:#0080c0;border:1px solid #000;"></div><div class="t" style="left:197.60px;top:153px;transform:scaleX(0.9900);transform-origin:0 0;">[Net] Ndb0</div><div class="t" style="left:197.60px;top:183px;transform:scaleX(0.9900);transform-origin:0 0;">[Net] Ndb1</div><div class="t" style="left:197.60px;top:213px;transform:scaleX(0.9900);transform-origin:0 0;">[Net] Ndb2</div><div class="t" style="left:197.60px;top:243px;transform:scaleX(0.9900);transform-origin:0 0;">[Net] Ndb3</div><div class="t" style="left:197.60px;top:273px;transform:scaleX(0.9900);transform-origin:0 0;">[Net] Ndb4</div><div class="t" style="left:197.60px;top:303px;transform:scaleX(0.9900);transform-origin:0 0;">[Net] Ndb5</div><div class="t" style="left:197.60px;top:333px;transform:scaleX(0.9900);transform-origin:0 0;">[Net] Ndb6</div><div class="t" style="left:197.60px;top:363px;transform:scaleX(0.9900);transform-origin:0 0;">[Net] Ndb7</div><div class="t" style="left:197.60px;top:393px;transform:scaleX(0.9900);transform-origin:0 0;">[Net] Ndb8</div><div class="t" style="left:197.60px;top:423px;transform:scaleX(0.9900);transform-origin:0 0;">[Net] Ndb9</div><div class="t" style="left:197.60px;top:453px;transform:scaleX(0.9900);transform-origin:0 0;">[Net] Ndb10</div><div class="t" style="left:197.60px;top:483px;transform:scaleX(0.9900);transform-origin:0 0;">[Net] Ndb11</div><div class="t" style="left:197.60px;top:513px;transform:scaleX(0.9900);transform-origin:0 0;">[Net] Ndb12</div><div class="t" style="left:197.60px;top:543px;transform:scaleX(0.9900);transform-origin:0 0;">[Net] Ndb13</div><div class="t" style="left:197.60px;top:573px;transform:scaleX(0.9900);transform-origin:0 0;">[Net] Ndb14</div><div class="t" style="left:197.60px;top:603px;transform:scaleX(0.9900);transform-origin:0 0;">[Net] Ndb15</div><div style="left:12px;top:666px;width:16px;height:16px;background:#ff0000;border:1px solid #000;box-shadow:inset 0 0 0 1px #202020;"></div><div style="left:12px;top:684px;width:16px;height:16px;background:#ffff00;border:1px solid #000;box-shadow:inset 0 0 0 1px #202020;"></div><div style="left:12px;top:702px;width:16px;height:16px;background:#00ff00;border:1px solid #000;box-shadow:inset 0 0 0 1px #202020;"></div><div style="left:12px;top:720px;width:16px;height:16px;background:#0000ff;border:1px solid #000;box-shadow:inset 0 0 0 1px #202020;"></div><div style="left:12px;top:738px;width:16px;height:16px;background:#ff00ff;border:1px solid #000;box-shadow:inset 0 0 0 1px #202020;"></div><div style="left:12px;top:756px;width:16px;height:16px;background:#00ffff;border:1px solid #000;box-shadow:inset 0 0 0 1px #202020;"></div><div style="left:30px;top:666px;width:16px;height:16px;background:#000000;border:1px solid #000;box-shadow:inset 0 0 0 1px #202020;"></div><div style="left:30px;top:684px;width:16px;height:16px;background:#5a5a5a;border:1px solid #000;box-shadow:inset 0 0 0 1px #202020;"></div><div style="left:30px;top:702px;width:16px;height:16px;background:#878787;border:1px solid #000;box-shadow:inset 0 0 0 1px #202020;"></div><div style="left:30px;top:720px;width:16px;height:16px;background:#aaaaaa;border:1px solid #000;box-shadow:inset 0 0 0 1px #202020;"></div><div style="left:30px;top:738px;width:16px;height:16px;background:#d8d8d8;border:1px solid #000;box-shadow:inset 0 0 0 1px #202020;"></div><div style="left:30px;top:756px;width:16px;height:16px;background:#ffffff;border:1px solid #000;box-shadow:inset 0 0 0 1px #202020;"></div><div style="left:48px;top:666px;width:16px;height:16px;background:#6b5849;border:1px solid #000;box-shadow:inset 0 0 0 1px #202020;"></div><div style="left:48px;top:684px;width:16px;height:16px;background:#8c7563;border:1px solid #000;box-shadow:inset 0 0 0 1px #202020;"></div><div style="left:48px;top:702px;width:16px;height:16px;background:#a08a77;border:1px solid #000;box-shadow:inset 0 0 0 1px #202020;"></div><div style="left:48px;top:720px;width:16px;height:16px;background:#ab9582;border:1px solid #000;box-shadow:inset 0 0 0 1px #202020;"></div><div style="left:48px;top:738px;width:16px;height:16px;background:#bba898;border:1px solid #000;box-shadow:inset 0 0 0 1px #202020;"></div><div style="left:48px;top:756px;width:16px;height:16px;background:#cbbba5;border:1px solid #000;box-shadow:inset 0 0 0 1px #202020;"></div><div style="left:66px;top:666px;width:16px;height:16px;background:#7a4330;border:1px solid #000;box-shadow:inset 0 0 0 1px #202020;"></div><div style="left:66px;top:684px;width:16px;height:16px;background:#a86245;border:1px solid #000;box-shadow:inset 0 0 0 1px #202020;"></div><div style="left:66px;top:702px;width:16px;height:16px;background:#c9876c;border:1px solid #000;box-shadow:inset 0 0 0 1px #202020;"></div><div style="left:66px;top:720px;width:16px;height:16px;background:#d7a08b;border:1px solid #000;box-shadow:inset 0 0 0 1px #202020;"></div><div style="left:66px;top:738px;width:16px;height:16px;background:#e6b7a6;border:1px solid #000;box-shadow:inset 0 0 0 1px #202020;"></div><div style="left:66px;top:756px;width:16px;height:16px;background:#eccabd;border:1px solid #000;box-shadow:inset 0 0 0 1px #202020;"></div><div style="left:84px;top:666px;width:16px;height:16px;background:#a00a17;border:1px solid #000;box-shadow:inset 0 0 0 1px #202020;"></div><div style="left:84px;top:684px;width:16px;height:16px;background:#d80a1a;border:1px solid #000;box-shadow:inset 0 0 0 1px #202020;"></div><div style="left:84px;top:702px;width:16px;height:16px;background:#ff5060;border:1px solid #000;box-shadow:inset 0 0 0 1px #202020;"></div><div style="left:84px;top:720px;width:16px;height:16px;background:#ff7b87;border:1px solid #000;box-shadow:inset 0 0 0 1px #202020;"></div><div style="left:84px;top:738px;width:16px;height:16px;background:#ffa3ab;border:1px solid #000;box-shadow:inset 0 0 0 1px #202020;"></div><div style="left:84px;top:756px;width:16px;height:16px;background:#ffc8cc;border:1px solid #000;box-shadow:inset 0 0 0 1px #202020;"></div><div style="left:102px;top:666px;width:16px;height:16px;background:#a85a10;border:1px solid #000;box-shadow:inset 0 0 0 1px #202020;"></div><div style="left:102px;top:684px;width:16px;height:16px;background:#e48014;border:1px solid #000;box-shadow:inset 0 0 0 1px #202020;"></div><div style="left:102px;top:702px;width:16px;height:16px;background:#f5a044;border:1px solid #000;box-shadow:inset 0 0 0 1px #202020;"></div><div style="left:102px;top:720px;width:16px;height:16px;background:#f5b06a;border:1px solid #000;box-shadow:inset 0 0 0 1px #202020;"></div><div style="left:102px;top:738px;width:16px;height:16px;background:#f8c894;border:1px solid #000;box-shadow:inset 0 0 0 1px #202020;"></div><div style="left:102px;top:756px;width:16px;height:16px;background:#fadcb9;border:1px solid #000;box-shadow:inset 0 0 0 1px #202020;"></div><div style="left:120px;top:666px;width:16px;height:16px;background:#8c8a14;border:1px solid #000;box-shadow:inset 0 0 0 1px #202020;"></div><div style="left:120px;top:684px;width:16px;height:16px;background:#b4ae0a;border:1px solid #000;box-shadow:inset 0 0 0 1px #202020;"></div><div style="left:120px;top:702px;width:16px;height:16px;background:#dcd800;border:1px solid #000;box-shadow:inset 0 0 0 1px #202020;"></div><div style="left:120px;top:720px;width:16px;height:16px;background:#f4f000;border:1px solid #000;box-shadow:inset 0 0 0 1px #202020;"></div><div style="left:120px;top:738px;width:16px;height:16px;background:#ffff88;border:1px solid #000;box-shadow:inset 0 0 0 1px #202020;"></div><div style="left:120px;top:756px;width:16px;height:16px;background:#ffffc0;border:1px solid #000;box-shadow:inset 0 0 0 1px #202020;"></div><div style="left:138px;top:666px;width:16px;height:16px;background:#476129;border:1px solid #000;box-shadow:inset 0 0 0 1px #202020;"></div><div style="left:138px;top:684px;width:16px;height:16px;background:#628a3a;border:1px solid #000;box-shadow:inset 0 0 0 1px #202020;"></div><div style="left:138px;top:702px;width:16px;height:16px;background:#80b050;border:1px solid #000;box-shadow:inset 0 0 0 1px #202020;"></div><div style="left:138px;top:720px;width:16px;height:16px;background:#9cc878;border:1px solid #000;box-shadow:inset 0 0 0 1px #202020;"></div><div style="left:138px;top:738px;width:16px;height:16px;background:#c4dcaa;border:1px solid #000;box-shadow:inset 0 0 0 1px #202020;"></div><div style="left:138px;top:756px;width:16px;height:16px;background:#d8e8c4;border:1px solid #000;box-shadow:inset 0 0 0 1px #202020;"></div><div style="left:156px;top:666px;width:16px;height:16px;background:#006a00;border:1px solid #000;box-shadow:inset 0 0 0 1px #202020;"></div><div style="left:156px;top:684px;width:16px;height:16px;background:#00a000;border:1px solid #000;box-shadow:inset 0 0 0 1px #202020;"></div><div style="left:156px;top:702px;width:16px;height:16px;background:#00e000;border:1px solid #000;box-shadow:inset 0 0 0 1px #202020;"></div><div style="left:156px;top:720px;width:16px;height:16px;background:#20ff20;border:1px solid #000;box-shadow:inset 0 0 0 1px #202020;"></div><div style="left:156px;top:738px;width:16px;height:16px;background:#90ff90;border:1px solid #000;box-shadow:inset 0 0 0 1px #202020;"></div><div style="left:156px;top:756px;width:16px;height:16px;background:#c0ffc0;border:1px solid #000;box-shadow:inset 0 0 0 1px #202020;"></div><div style="left:174px;top:666px;width:16px;height:16px;background:#008060;border:1px solid #000;box-shadow:inset 0 0 0 1px #202020;"></div><div style="left:174px;top:684px;width:16px;height:16px;background:#00a078;border:1px solid #000;box-shadow:inset 0 0 0 1px #202020;"></div><div style="left:174px;top:702px;width:16px;height:16px;background:#00d898;border:1px solid #000;box-shadow:inset 0 0 0 1px #202020;"></div><div style="left:174px;top:720px;width:16px;height:16px;background:#00f0b4;border:1px solid #000;box-shadow:inset 0 0 0 1px #202020;"></div><div style="left:174px;top:738px;width:16px;height:16px;background:#70ffd8;border:1px solid #000;box-shadow:inset 0 0 0 1px #202020;"></div><div style="left:174px;top:756px;width:16px;height:16px;background:#b0ffe8;border:1px solid #000;box-shadow:inset 0 0 0 1px #202020;"></div><div style="left:192px;top:666px;width:16px;height:16px;background:#007090;border:1px solid #000;box-shadow:inset 0 0 0 1px #202020;"></div><div style="left:192px;top:684px;width:16px;height:16px;background:#0090b8;border:1px solid #000;box-shadow:inset 0 0 0 1px #202020;"></div><div style="left:192px;top:702px;width:16px;height:16px;background:#00c0e8;border:1px solid #000;box-shadow:inset 0 0 0 1px #202020;"></div><div style="left:192px;top:720px;width:16px;height:16px;background:#10d8ff;border:1px solid #000;box-shadow:inset 0 0 0 1px #202020;"></div><div style="left:192px;top:738px;width:16px;height:16px;background:#90ecff;border:1px solid #000;box-shadow:inset 0 0 0 1px #202020;"></div><div style="left:192px;top:756px;width:16px;height:16px;background:#c0f4ff;border:1px solid #000;box-shadow:inset 0 0 0 1px #202020;"></div><div style="left:210px;top:666px;width:16px;height:16px;background:#0050b0;border:1px solid #000;box-shadow:inset 0 0 0 1px #202020;"></div><div style="left:210px;top:684px;width:16px;height:16px;background:#0070e0;border:1px solid #000;box-shadow:inset 0 0 0 1px #202020;"></div><div style="left:210px;top:702px;width:16px;height:16px;background:#30a0ff;border:1px solid #000;box-shadow:inset 0 0 0 1px #202020;"></div><div style="left:210px;top:720px;width:16px;height:16px;background:#60b0ff;border:1px solid #000;box-shadow:inset 0 0 0 1px #202020;"></div><div style="left:210px;top:738px;width:16px;height:16px;background:#a0d0ff;border:1px solid #000;box-shadow:inset 0 0 0 1px #202020;"></div><div style="left:210px;top:756px;width:16px;height:16px;background:#c4e4ff;border:1px solid #000;box-shadow:inset 0 0 0 1px #202020;"></div><div style="left:228px;top:666px;width:16px;height:16px;background:#000090;border:1px solid #000;box-shadow:inset 0 0 0 1px #202020;"></div><div style="left:228px;top:684px;width:16px;height:16px;background:#0000e0;border:1px solid #000;box-shadow:inset 0 0 0 1px #202020;"></div><div style="left:228px;top:702px;width:16px;height:16px;background:#6060ff;border:1px solid #000;box-shadow:inset 0 0 0 1px #202020;"></div><div style="left:228px;top:720px;width:16px;height:16px;background:#7880ff;border:1px solid #000;box-shadow:inset 0 0 0 1px #202020;"></div><div style="left:228px;top:738px;width:16px;height:16px;background:#b0b8ff;border:1px solid #000;box-shadow:inset 0 0 0 1px #202020;"></div><div style="left:228px;top:756px;width:16px;height:16px;background:#c8d0ff;border:1px solid #000;box-shadow:inset 0 0 0 1px #202020;"></div><div style="left:246px;top:666px;width:16px;height:16px;background:#500090;border:1px solid #000;box-shadow:inset 0 0 0 1px #202020;"></div><div style="left:246px;top:684px;width:16px;height:16px;background:#8000d8;border:1px solid #000;box-shadow:inset 0 0 0 1px #202020;"></div><div style="left:246px;top:702px;width:16px;height:16px;background:#b040ff;border:1px solid #000;box-shadow:inset 0 0 0 1px #202020;"></div><div style="left:246px;top:720px;width:16px;height:16px;background:#c070ff;border:1px solid #000;box-shadow:inset 0 0 0 1px #202020;"></div><div style="left:246px;top:738px;width:16px;height:16px;background:#e0a8ff;border:1px solid #000;box-shadow:inset 0 0 0 1px #202020;"></div><div style="left:246px;top:756px;width:16px;height:16px;background:#ecc8ff;border:1px solid #000;box-shadow:inset 0 0 0 1px #202020;"></div><div style="left:264px;top:666px;width:16px;height:16px;background:#880088;border:1px solid #000;box-shadow:inset 0 0 0 1px #202020;"></div><div style="left:264px;top:684px;width:16px;height:16px;background:#b800c0;border:1px solid #000;box-shadow:inset 0 0 0 1px #202020;"></div><div style="left:264px;top:702px;width:16px;height:16px;background:#f000f0;border:1px solid #000;box-shadow:inset 0 0 0 1px #202020;"></div><div style="left:264px;top:720px;width:16px;height:16px;background:#ff60ff;border:1px solid #000;box-shadow:inset 0 0 0 1px #202020;"></div><div style="left:264px;top:738px;width:16px;height:16px;background:#ffa8ff;border:1px solid #000;box-shadow:inset 0 0 0 1px #202020;"></div><div style="left:264px;top:756px;width:16px;height:16px;background:#ffd0ff;border:1px solid #000;box-shadow:inset 0 0 0 1px #202020;"></div><div style="left:282px;top:666px;width:16px;height:16px;background:#900040;border:1px solid #000;box-shadow:inset 0 0 0 1px #202020;"></div><div style="left:282px;top:684px;width:16px;height:16px;background:#d00060;border:1px solid #000;box-shadow:inset 0 0 0 1px #202020;"></div><div style="left:282px;top:702px;width:16px;height:16px;background:#ff3090;border:1px solid #000;box-shadow:inset 0 0 0 1px #202020;"></div><div style="left:282px;top:720px;width:16px;height:16px;background:#ff70b0;border:1px solid #000;box-shadow:inset 0 0 0 1px #202020;"></div><div style="left:282px;top:738px;width:16px;height:16px;background:#ffb0d4;border:1px solid #000;box-shadow:inset 0 0 0 1px #202020;"></div><div style="left:282px;top:756px;width:16px;height:16px;background:#ffd0ff;border:1px solid #000;box-shadow:inset 0 0 0 1px #202020;"></div><div style="left:300px;top:666px;width:16px;height:16px;background:#ff0000;border:1px solid #000;box-shadow:inset 0 0 0 1px #202020;"></div><div style="left:300px;top:684px;width:16px;height:16px;background:#ff0000;border:1px solid #000;box-shadow:inset 0 0 0 1px #202020;"></div><div style="left:300px;top:702px;width:16px;height:16px;background:#ff0000;border:1px solid #000;box-shadow:inset 0 0 0 1px #202020;"></div><div style="left:300px;top:720px;width:16px;height:16px;background:#ff0000;border:1px solid #000;box-shadow:inset 0 0 0 1px #202020;"></div><div style="left:300px;top:738px;width:16px;height:16px;background:#ff0000;border:1px solid #000;box-shadow:inset 0 0 0 1px #202020;"></div><div style="left:300px;top:756px;width:16px;height:16px;background:#ff0000;border:1px solid #000;box-shadow:inset 0 0 0 1px #202020;"></div><div style="left:318px;top:666px;width:16px;height:16px;background:#ff7878;border:1px solid #000;box-shadow:inset 0 0 0 1px #202020;"></div><div style="left:318px;top:684px;width:16px;height:16px;background:#ff7878;border:1px solid #000;box-shadow:inset 0 0 0 1px #202020;"></div><div style="left:318px;top:702px;width:16px;height:16px;background:#ff7878;border:1px solid #000;box-shadow:inset 0 0 0 1px #202020;"></div><div style="left:318px;top:720px;width:16px;height:16px;background:#ff7878;border:1px solid #000;box-shadow:inset 0 0 0 1px #202020;"></div><div style="left:318px;top:738px;width:16px;height:16px;background:#ff7878;border:1px solid #000;box-shadow:inset 0 0 0 1px #202020;"></div><div style="left:318px;top:756px;width:16px;height:16px;background:#ff7878;border:1px solid #000;box-shadow:inset 0 0 0 1px #202020;"></div><div style="left:336px;top:666px;width:16px;height:16px;background:#ff8000;border:1px solid #000;box-shadow:inset 0 0 0 1px #202020;"></div><div style="left:336px;top:684px;width:16px;height:16px;background:#ff8000;border:1px solid #000;box-shadow:inset 0 0 0 1px #202020;"></div><div style="left:336px;top:702px;width:16px;height:16px;background:#ff8000;border:1px solid #000;box-shadow:inset 0 0 0 1px #202020;"></div><div style="left:336px;top:720px;width:16px;height:16px;background:#ff8000;border:1px solid #000;box-shadow:inset 0 0 0 1px #202020;"></div><div style="left:336px;top:738px;width:16px;height:16px;background:#ff8000;border:1px solid #000;box-shadow:inset 0 0 0 1px #202020;"></div><div style="left:336px;top:756px;width:16px;height:16px;background:#ff8000;border:1px solid #000;box-shadow:inset 0 0 0 1px #202020;"></div><div style="left:354px;top:666px;width:16px;height:16px;background:#ffc800;border:1px solid #000;box-shadow:inset 0 0 0 1px #202020;"></div><div style="left:354px;top:684px;width:16px;height:16px;background:#ffc800;border:1px solid #000;box-shadow:inset 0 0 0 1px #202020;"></div><div style="left:354px;top:702px;width:16px;height:16px;background:#ffc800;border:1px solid #000;box-shadow:inset 0 0 0 1px #202020;"></div><div style="left:354px;top:720px;width:16px;height:16px;background:#ffc800;border:1px solid #000;box-shadow:inset 0 0 0 1px #202020;"></div><div style="left:354px;top:738px;width:16px;height:16px;background:#ffc800;border:1px solid #000;box-shadow:inset 0 0 0 1px #202020;"></div><div style="left:354px;top:756px;width:16px;height:16px;background:#ffc800;border:1px solid #000;box-shadow:inset 0 0 0 1px #202020;"></div><div style="left:372px;top:666px;width:16px;height:16px;background:#ffff00;border:1px solid #000;box-shadow:inset 0 0 0 1px #202020;"></div><div style="left:372px;top:684px;width:16px;height:16px;background:#ffff00;border:1px solid #000;box-shadow:inset 0 0 0 1px #202020;"></div><div style="left:372px;top:702px;width:16px;height:16px;background:#ffff00;border:1px solid #000;box-shadow:inset 0 0 0 1px #202020;"></div><div style="left:372px;top:720px;width:16px;height:16px;background:#ffff00;border:1px solid #000;box-shadow:inset 0 0 0 1px #202020;"></div><div style="left:372px;top:738px;width:16px;height:16px;background:#ffff00;border:1px solid #000;box-shadow:inset 0 0 0 1px #202020;"></div><div style="left:372px;top:756px;width:16px;height:16px;background:#ffff00;border:1px solid #000;box-shadow:inset 0 0 0 1px #202020;"></div><div style="left:390px;top:666px;width:16px;height:16px;background:#d0d060;border:1px solid #000;box-shadow:inset 0 0 0 1px #202020;"></div><div style="left:390px;top:684px;width:16px;height:16px;background:#d0d060;border:1px solid #000;box-shadow:inset 0 0 0 1px #202020;"></div><div style="left:390px;top:702px;width:16px;height:16px;background:#d0d060;border:1px solid #000;box-shadow:inset 0 0 0 1px #202020;"></div><div style="left:390px;top:720px;width:16px;height:16px;background:#d0d060;border:1px solid #000;box-shadow:inset 0 0 0 1px #202020;"></div><div style="left:390px;top:738px;width:16px;height:16px;background:#d0d060;border:1px solid #000;box-shadow:inset 0 0 0 1px #202020;"></div><div style="left:390px;top:756px;width:16px;height:16px;background:#d0d060;border:1px solid #000;box-shadow:inset 0 0 0 1px #202020;"></div><div style="left:408px;top:666px;width:16px;height:16px;background:#b0ff00;border:1px solid #000;box-shadow:inset 0 0 0 1px #202020;"></div><div style="left:408px;top:684px;width:16px;height:16px;background:#b0ff00;border:1px solid #000;box-shadow:inset 0 0 0 1px #202020;"></div><div style="left:408px;top:702px;width:16px;height:16px;background:#b0ff00;border:1px solid #000;box-shadow:inset 0 0 0 1px #202020;"></div><div style="left:408px;top:720px;width:16px;height:16px;background:#b0ff00;border:1px solid #000;box-shadow:inset 0 0 0 1px #202020;"></div><div style="left:408px;top:738px;width:16px;height:16px;background:#b0ff00;border:1px solid #000;box-shadow:inset 0 0 0 1px #202020;"></div><div style="left:408px;top:756px;width:16px;height:16px;background:#b0ff00;border:1px solid #000;box-shadow:inset 0 0 0 1px #202020;"></div><div style="left:426px;top:666px;width:16px;height:16px;background:#00ff00;border:1px solid #000;box-shadow:inset 0 0 0 1px #202020;"></div><div style="left:426px;top:684px;width:16px;height:16px;background:#00ff00;border:1px solid #000;box-shadow:inset 0 0 0 1px #202020;"></div><div style="left:426px;top:702px;width:16px;height:16px;background:#00ff00;border:1px solid #000;box-shadow:inset 0 0 0 1px #202020;"></div><div style="left:426px;top:720px;width:16px;height:16px;background:#00ff00;border:1px solid #000;box-shadow:inset 0 0 0 1px #202020;"></div><div style="left:426px;top:738px;width:16px;height:16px;background:#00ff00;border:1px solid #000;box-shadow:inset 0 0 0 1px #202020;"></div><div style="left:426px;top:756px;width:16px;height:16px;background:#00ff00;border:1px solid #000;box-shadow:inset 0 0 0 1px #202020;"></div><div style="left:444px;top:666px;width:16px;height:16px;background:#007000;border:1px solid #000;box-shadow:inset 0 0 0 1px #202020;"></div><div style="left:444px;top:684px;width:16px;height:16px;background:#007000;border:1px solid #000;box-shadow:inset 0 0 0 1px #202020;"></div><div style="left:444px;top:702px;width:16px;height:16px;background:#007000;border:1px solid #000;box-shadow:inset 0 0 0 1px #202020;"></div><div style="left:444px;top:720px;width:16px;height:16px;background:#007000;border:1px solid #000;box-shadow:inset 0 0 0 1px #202020;"></div><div style="left:444px;top:738px;width:16px;height:16px;background:#007000;border:1px solid #000;box-shadow:inset 0 0 0 1px #202020;"></div><div style="left:444px;top:756px;width:16px;height:16px;background:#007000;border:1px solid #000;box-shadow:inset 0 0 0 1px #202020;"></div><div style="left:462px;top:666px;width:16px;height:16px;background:#00ffff;border:1px solid #000;box-shadow:inset 0 0 0 1px #202020;"></div><div style="left:462px;top:684px;width:16px;height:16px;background:#00ffff;border:1px solid #000;box-shadow:inset 0 0 0 1px #202020;"></div><div style="left:462px;top:702px;width:16px;height:16px;background:#00ffff;border:1px solid #000;box-shadow:inset 0 0 0 1px #202020;"></div><div style="left:462px;top:720px;width:16px;height:16px;background:#00ffff;border:1px solid #000;box-shadow:inset 0 0 0 1px #202020;"></div><div style="left:462px;top:738px;width:16px;height:16px;background:#00ffff;border:1px solid #000;box-shadow:inset 0 0 0 1px #202020;"></div><div style="left:462px;top:756px;width:16px;height:16px;background:#00ffff;border:1px solid #000;box-shadow:inset 0 0 0 1px #202020;"></div><div style="left:480px;top:666px;width:16px;height:16px;background:#0080c0;border:1px solid #000;box-shadow:inset 0 0 0 1px #202020;"></div><div style="left:480px;top:684px;width:16px;height:16px;background:#0080c0;border:1px solid #000;box-shadow:inset 0 0 0 1px #202020;"></div><div style="left:480px;top:702px;width:16px;height:16px;background:#0080c0;border:1px solid #000;box-shadow:inset 0 0 0 1px #202020;"></div><div style="left:480px;top:720px;width:16px;height:16px;background:#0080c0;border:1px solid #000;box-shadow:inset 0 0 0 1px #202020;"></div><div style="left:480px;top:738px;width:16px;height:16px;background:#0080c0;border:1px solid #000;box-shadow:inset 0 0 0 1px #50b8ff;"></div><div style="left:480px;top:756px;width:16px;height:16px;background:#0080c0;border:1px solid #000;box-shadow:inset 0 0 0 1px #202020;"></div><div style="left:498px;top:666px;width:16px;height:16px;background:#0000ff;border:1px solid #000;box-shadow:inset 0 0 0 1px #202020;"></div><div style="left:498px;top:684px;width:16px;height:16px;background:#0000ff;border:1px solid #000;box-shadow:inset 0 0 0 1px #202020;"></div><div style="left:498px;top:702px;width:16px;height:16px;background:#0000ff;border:1px solid #000;box-shadow:inset 0 0 0 1px #202020;"></div><div style="left:498px;top:720px;width:16px;height:16px;background:#0000ff;border:1px solid #000;box-shadow:inset 0 0 0 1px #202020;"></div><div style="left:498px;top:738px;width:16px;height:16px;background:#0000ff;border:1px solid #000;box-shadow:inset 0 0 0 1px #202020;"></div><div style="left:498px;top:756px;width:16px;height:16px;background:#0000ff;border:1px solid #000;box-shadow:inset 0 0 0 1px #202020;"></div><div style="left:516px;top:666px;width:16px;height:16px;background:#7878ff;border:1px solid #000;box-shadow:inset 0 0 0 1px #202020;"></div><div style="left:516px;top:684px;width:16px;height:16px;background:#7878ff;border:1px solid #000;box-shadow:inset 0 0 0 1px #202020;"></div><div style="left:516px;top:702px;width:16px;height:16px;background:#7878ff;border:1px solid #000;box-shadow:inset 0 0 0 1px #202020;"></div><div style="left:516px;top:720px;width:16px;height:16px;background:#7878ff;border:1px solid #000;box-shadow:inset 0 0 0 1px #202020;"></div><div style="left:516px;top:738px;width:16px;height:16px;background:#7878ff;border:1px solid #000;box-shadow:inset 0 0 0 1px #202020;"></div><div style="left:516px;top:756px;width:16px;height:16px;background:#7878ff;border:1px solid #000;box-shadow:inset 0 0 0 1px #202020;"></div><div style="left:534px;top:666px;width:16px;height:16px;background:#9a66e0;border:1px solid #000;box-shadow:inset 0 0 0 1px #202020;"></div><div style="left:534px;top:684px;width:16px;height:16px;background:#9a66e0;border:1px solid #000;box-shadow:inset 0 0 0 1px #202020;"></div><div style="left:534px;top:702px;width:16px;height:16px;background:#9a66e0;border:1px solid #000;box-shadow:inset 0 0 0 1px #202020;"></div><div style="left:534px;top:720px;width:16px;height:16px;background:#9966ff;border:1px solid #000;box-shadow:inset 0 0 0 1px #202020;"></div><div style="left:534px;top:738px;width:16px;height:16px;background:#9966ff;border:1px solid #000;box-shadow:inset 0 0 0 1px #202020;"></div><div style="left:534px;top:756px;width:16px;height:16px;background:#9966ff;border:1px solid #000;box-shadow:inset 0 0 0 1px #202020;"></div><div style="left:552px;top:666px;width:16px;height:16px;background:#9a00ff;border:1px solid #000;box-shadow:inset 0 0 0 1px #202020;"></div><div style="left:552px;top:684px;width:16px;height:16px;background:#9a00ff;border:1px solid #000;box-shadow:inset 0 0 0 1px #202020;"></div><div style="left:552px;top:702px;width:16px;height:16px;background:#9a00ff;border:1px solid #000;box-shadow:inset 0 0 0 1px #202020;"></div><div style="left:552px;top:720px;width:16px;height:16px;background:#9a00ff;border:1px solid #000;box-shadow:inset 0 0 0 1px #202020;"></div><div style="left:552px;top:738px;width:16px;height:16px;background:#9a00ff;border:1px solid #000;box-shadow:inset 0 0 0 1px #202020;"></div><div style="left:552px;top:756px;width:16px;height:16px;background:#9a00ff;border:1px solid #000;box-shadow:inset 0 0 0 1px #202020;"></div><div style="left:570px;top:666px;width:16px;height:16px;background:#ff00ff;border:1px solid #000;box-shadow:inset 0 0 0 1px #202020;"></div><div style="left:570px;top:684px;width:16px;height:16px;background:#ff00ff;border:1px solid #000;box-shadow:inset 0 0 0 1px #202020;"></div><div style="left:570px;top:702px;width:16px;height:16px;background:#ff00ff;border:1px solid #000;box-shadow:inset 0 0 0 1px #202020;"></div><div style="left:570px;top:720px;width:16px;height:16px;background:#ff00ff;border:1px solid #000;box-shadow:inset 0 0 0 1px #202020;"></div><div style="left:570px;top:738px;width:16px;height:16px;background:#ff00ff;border:1px solid #000;box-shadow:inset 0 0 0 1px #202020;"></div><div style="left:570px;top:756px;width:16px;height:16px;background:#ff00ff;border:1px solid #000;box-shadow:inset 0 0 0 1px #202020;"></div><div class="t" style="left:12.30px;top:646px;transform:scaleX(0.9855);transform-origin:0 0;">Available colors:</div><div style="left:462px;top:647px;width:11px;height:11px;background:#fff;box-shadow:0 0 0 1px #2a2a2a;"></div><div class="t" style="left:479.46px;top:646px;transform:scaleX(1.0420);transform-origin:0 0;">Highlight unused colors</div><div class="t" style="left:612.80px;top:646px;transform:scaleX(0.9404);transform-origin:0 0;">Selected:</div><div style="left:612px;top:666px;width:78px;height:126px;background:#0080c0;border:1px solid #000;"></div><div class="t" style="left:12px;top:798px;width:92px;height:22px;background:#545454;border:1px solid #6c6c6c;text-align:center;line-height:20px;"></div><div class="t" style="left:50.20px;top:803px;transform:scaleX(0.8824);transform-origin:0 0;">OK</div><div class="t" style="left:110px;top:798px;width:92px;height:22px;background:#545454;border:1px solid #6c6c6c;text-align:center;line-height:20px;"></div><div class="t" style="left:139.40px;top:803px;transform:scaleX(0.9472);transform-origin:0 0;">Cancel</div><div class="t" style="left:208px;top:798px;width:92px;height:22px;background:#545454;border:1px solid #6c6c6c;text-align:center;line-height:20px;"></div><div class="t" style="left:238.90px;top:803px;transform:scaleX(0.9966);transform-origin:0 0;">Apply</div><div class="t" style="left:306px;top:798px;width:92px;height:22px;background:#545454;border:1px solid #6c6c6c;text-align:center;line-height:20px;"></div><div class="t" style="left:337.35px;top:803px;transform:scaleX(0.9483);transform-origin:0 0;">Reset</div><div class="t" style="left:459px;top:798px;width:92px;height:22px;background:#545454;border:1px solid #6c6c6c;text-align:center;line-height:20px;"></div><div class="t" style="left:485.29px;top:803px;transform:scaleX(1.0125);transform-origin:0 0;">Load</div><svg style="left:537px;top:806px" width="10" height="6"><path d="M0 0 L9.5 0 L4.75 5.5 Z" fill="#fff"/></svg><div class="t" style="left:557px;top:798px;width:92px;height:22px;background:#545454;border:1px solid #6c6c6c;text-align:center;line-height:20px;"></div><div class="t" style="left:585.20px;top:803px;transform:scaleX(0.8500);transform-origin:0 0;">Save</div><svg style="left:635px;top:806px" width="10" height="6"><path d="M0 0 L9.5 0 L4.75 5.5 Z" fill="#fff"/></svg><div class="t" style="left:709px;top:798px;width:92px;height:22px;background:#545454;border:1px solid #6c6c6c;text-align:center;line-height:20px;"></div><div class="t" style="left:742.49px;top:803px;transform:scaleX(1.0087);transform-origin:0 0;">Help</div><div style="left:809px;top:823px;width:1px;height:1px;background:#0a0a0a;"></div><div style="left:810px;top:822px;width:1px;height:1px;background:#f0f0f0;"></div><div style="left:806px;top:826px;width:1px;height:1px;background:#0a0a0a;"></div><div style="left:807px;top:825px;width:1px;height:1px;background:#f0f0f0;"></div><div style="left:809px;top:826px;width:1px;height:1px;background:#0a0a0a;"></div><div style="left:810px;top:825px;width:1px;height:1px;background:#f0f0f0;"></div><div style="left:803px;top:829px;width:1px;height:1px;background:#0a0a0a;"></div><div style="left:804px;top:828px;width:1px;height:1px;background:#f0f0f0;"></div><div style="left:806px;top:829px;width:1px;height:1px;background:#0a0a0a;"></div><div style="left:807px;top:828px;width:1px;height:1px;background:#f0f0f0;"></div></body></html>
